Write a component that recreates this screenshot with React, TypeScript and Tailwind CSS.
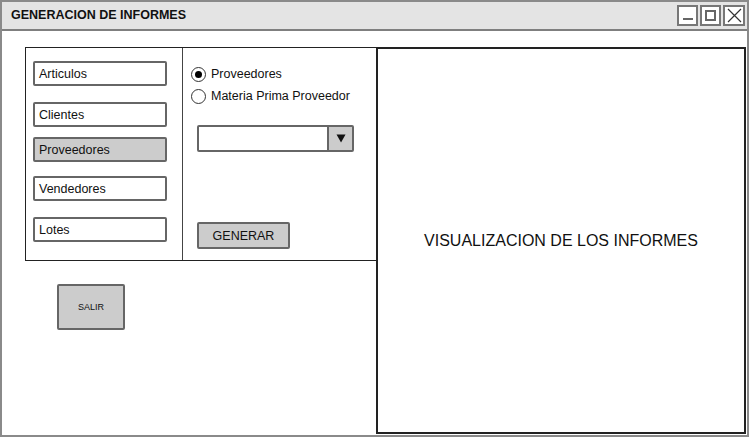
import React from 'react';

const font = { fontFamily: '"Liberation Sans", Arial, sans-serif' };

const items = [
  { label: 'Articulos', mt: 'mt-[13px]', active: false },
  { label: 'Clientes', mt: 'mt-[16px]', active: false },
  { label: 'Proveedores', mt: 'mt-[10px]', active: true },
  { label: 'Vendedores', mt: 'mt-[14px]', active: false },
  { label: 'Lotes', mt: 'mt-[16px]', active: false },
];

function Radio({ checked, label }: { checked?: boolean; label: string }) {
  return (
    <div className="flex items-center gap-[5px] h-[22px]">
      <span className="w-[15px] h-[15px] rounded-full border border-[#333] flex items-center justify-center bg-white">
        {checked && <span className="w-[7px] h-[7px] rounded-full bg-black" />}
      </span>
      <span className="text-[12.5px] text-[#111]">{label}</span>
    </div>
  );
}

export default function App() {
  return (
    <div className="w-[749px] h-[437px] bg-white text-black" style={font}>
      <div className="w-full h-full border-2 border-[#8a8a8a] flex flex-col">
        {/* title bar */}
        <div className="h-[29px] bg-[#e4e4e4] border-b-2 border-[#7f7f7f] flex items-center justify-between pl-[9px] pr-[2px]">
          <span className="text-[12.5px] font-bold text-[#111]">GENERACION DE INFORMES</span>
          <div className="flex gap-[2px]">
            <div className="w-[21px] h-[21px] border-2 border-[#777] bg-white flex items-end justify-center pb-[4px]">
              <div className="w-[10px] h-[2px] bg-[#666]" />
            </div>
            <div className="w-[21px] h-[21px] border-2 border-[#777] bg-white flex items-center justify-center">
              <div className="w-[11px] h-[11px] border-2 border-[#666]" />
            </div>
            <div className="w-[22px] h-[21px] border-2 border-[#777] bg-white flex items-center justify-center">
              <svg width="15" height="15" viewBox="0 0 15 15">
                <path d="M1 1 L14 14 M14 1 L1 14" stroke="#333" strokeWidth="1.2" />
              </svg>
            </div>
          </div>
        </div>

        {/* body */}
        <div className="flex-1 flex pl-[23px] pt-[16px] pr-[1px] pb-[1px]">
          <div className="w-[351px] flex flex-col">
            <div className="h-[214px] flex border-l border-t border-b border-[#222]">
              <div className="w-[157px] border-r border-[#444] flex flex-col pl-[7px]">
                {items.map((it) => (
                  <div
                    key={it.label}
                    className={`${it.mt} w-[134px] h-[25px] rounded-[2px] border-2 border-[#666] flex items-center pl-[4px] pt-[2px] text-[12.5px] text-[#111] ${
                      it.active ? 'bg-[#cccccc]' : 'bg-white'
                    }`}
                  >
                    {it.label}
                  </div>
                ))}
              </div>
              <div className="flex-1 flex flex-col pl-[8px] pt-[15px]">
                <Radio checked label="Proveedores" />
                <Radio label="Materia Prima Proveedor" />
                <div className="ml-[6px] mt-[18px] w-[157px] h-[27px] border-2 border-[#666] rounded-[2px] flex bg-white">
                  <div className="flex-1" />
                  <div className="w-[25px] border-l-2 border-[#666] bg-[#cccccc] flex items-center justify-center">
                    <svg width="10" height="9" viewBox="0 0 10 9">
                      <path d="M0.5 0.5 H9.5 L5 8.5 Z" fill="#111" />
                    </svg>
                  </div>
                </div>
                <div className="ml-[6px] mt-[70px] w-[93px] h-[27px] border-2 border-[#666] rounded-[2px] bg-[#cccccc] flex items-center justify-center pt-[1px] text-[12.5px] text-[#111]">
                  GENERAR
                </div>
              </div>
            </div>
            <div className="ml-[32px] mt-[23px] w-[68px] h-[46px] border-2 border-[#666] rounded-[2px] bg-[#cccccc] flex items-center justify-center pt-[2px] text-[9px] text-[#111]">
              SALIR
            </div>
          </div>
          <div className="flex-1 border-2 border-[#222] flex items-center justify-center">
            <span className="text-[16px] text-[#111]">VISUALIZACION DE LOS INFORMES</span>
          </div>
        </div>
      </div>
    </div>
  );
}
